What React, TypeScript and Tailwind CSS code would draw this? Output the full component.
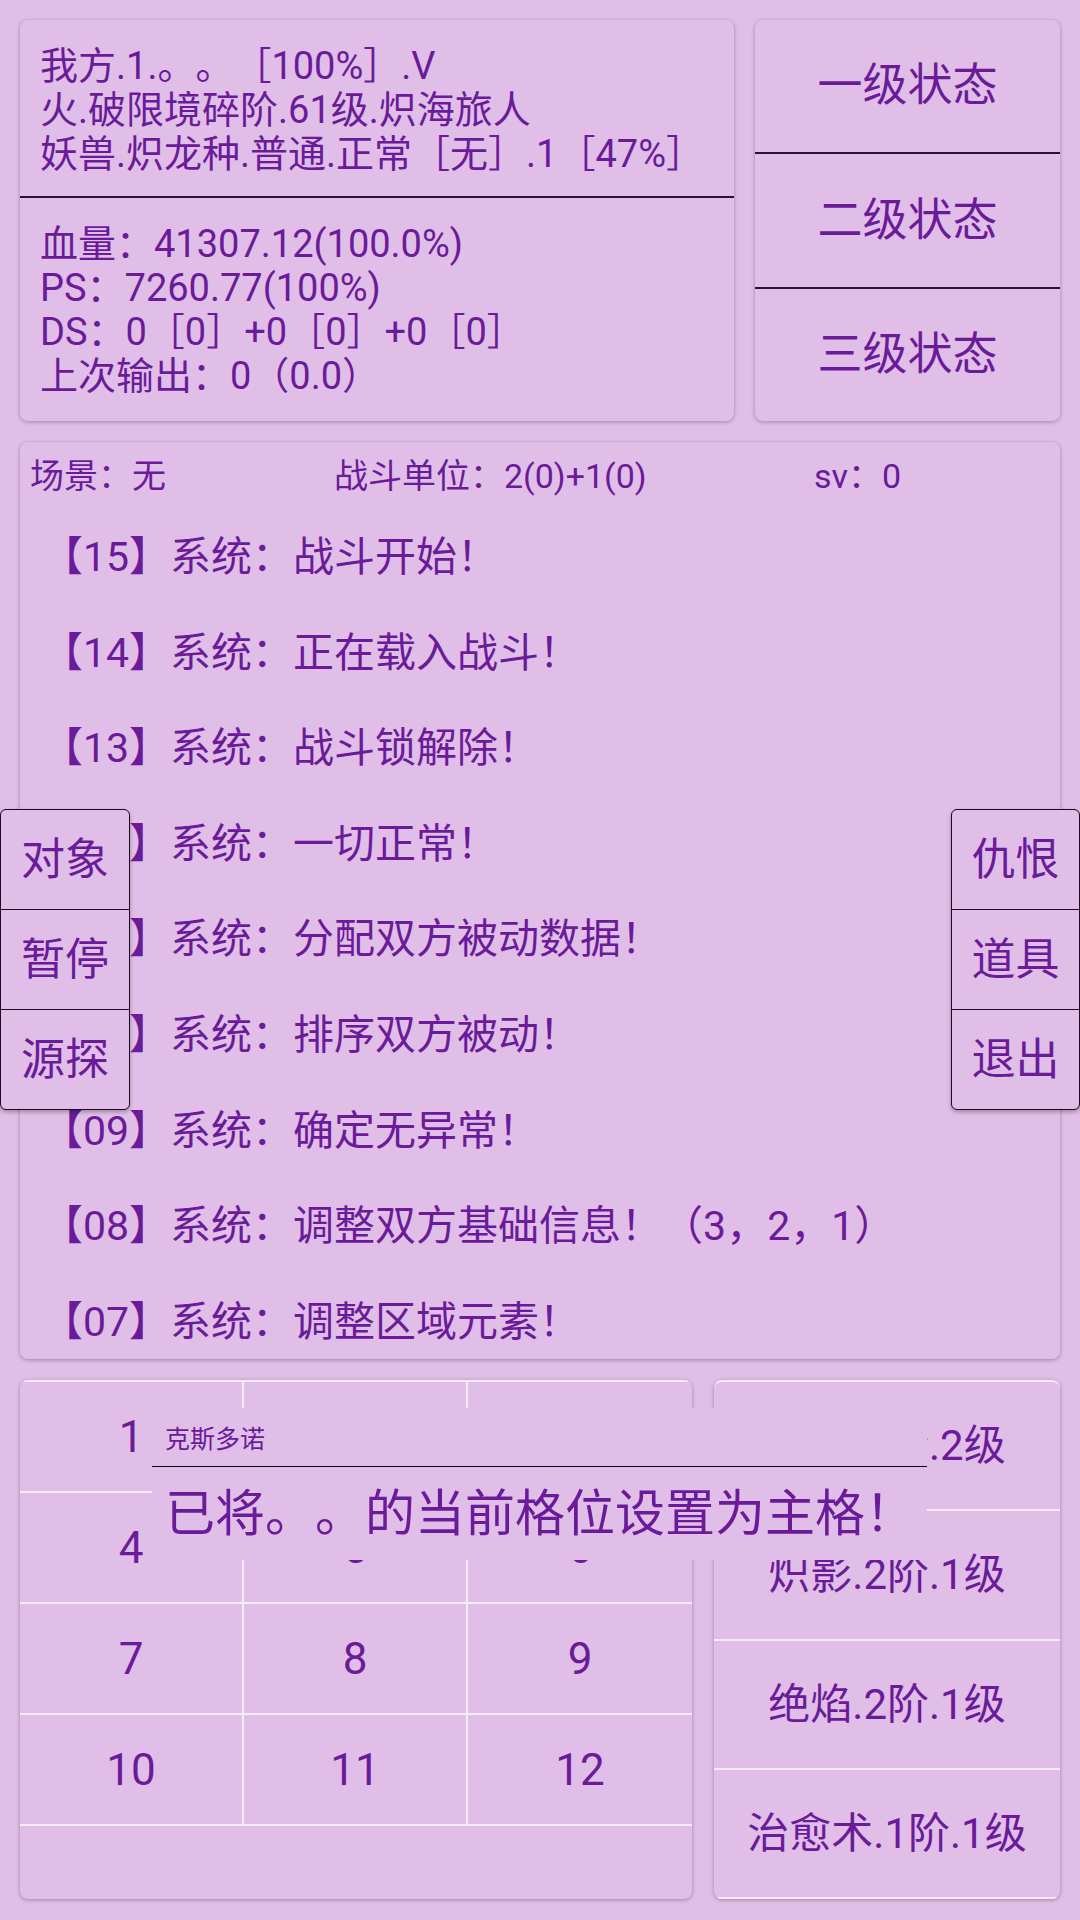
import React from "react";

const logs: [string, string][] = [
  ["15", "战斗开始！"],
  ["14", "正在载入战斗！"],
  ["13", "战斗锁解除！"],
  ["12", "一切正常！"],
  ["11", "分配双方被动数据！"],
  ["10", "排序双方被动！"],
  ["09", "确定无异常！"],
  ["08", "调整双方基础信息！（3，2，1）"],
  ["07", "调整区域元素！"],
];

const nums = ["1", "2", "3", "4", "5", "6", "7", "8", "9", "10", "11", "12"];
const skills = ["炎爆.2阶.2级", "炽影.2阶.1级", "绝焰.2阶.1级", "治愈术.1阶.1级"];

export default function App() {
  return (
    <div className="relative w-[1080px] h-[1920px] overflow-hidden bg-[#e1bee7] text-[#6a1b9a] font-[family-name:Roboto,'Noto_Sans_CJK_SC',sans-serif] [text-spacing-trim:space-all] px-[20px] pt-[20px] flex flex-col gap-[21px]">
      {/* Top row */}
      <div className="flex gap-[21px] h-[401px] shrink-0">
        <div className="w-[714px] shrink-0 rounded-[8px] bg-[#e1bee7] shadow-[0_1px_4px_rgba(0,0,0,0.3)] flex flex-col overflow-hidden">
          <div className="h-[178px] shrink-0 pt-[24px] pl-[20px] text-[38px] leading-[44px] border-b-2 border-[#2a1030] whitespace-nowrap">
            <div>我方.1.。。［100%］.V</div>
            <div>火.破限境碎阶.61级.炽海旅人</div>
            <div>妖兽.炽龙种.普通.正常［无］.1［47%］</div>
          </div>
          <div className="flex-1 pt-[24px] pl-[20px] text-[38px] leading-[44px] whitespace-nowrap">
            <div>血量：41307.12(100.0%)</div>
            <div>PS：7260.77(100%)</div>
            <div>DS：0［0］+0［0］+0［0］</div>
            <div>上次输出：0（0.0）</div>
          </div>
        </div>
        <div className="flex-1 rounded-[8px] bg-[#e1bee7] shadow-[0_1px_4px_rgba(0,0,0,0.3)] flex flex-col overflow-hidden">
          {["一级状态", "二级状态", "三级状态"].map((t, i) => (
            <div
              key={t}
              className={`flex-1 flex items-center justify-center text-[45px] ${i < 2 ? "border-b-2 border-[#2a1030]" : ""}`}
            >
              {t}
            </div>
          ))}
        </div>
      </div>

      {/* Battle log */}
      <div className="h-[917px] shrink-0 rounded-[8px] bg-[#e1bee7] shadow-[0_1px_4px_rgba(0,0,0,0.3)] flex flex-col overflow-hidden">
        <div className="h-[68px] shrink-0 flex items-center pl-[10px] text-[34px] whitespace-nowrap">
          <span className="w-[304px] shrink-0">场景：无</span>
          <span className="w-[480px] shrink-0">战斗单位：2(0)+1(0)</span>
          <span>sv：0</span>
        </div>
        {logs.map(([n, t]) => (
          <div key={n} className="h-[95.6px] shrink-0 flex items-center pl-[22px] text-[41px] whitespace-nowrap">
            【{n}】系统：{t}
          </div>
        ))}
      </div>

      {/* Bottom row */}
      <div className="flex gap-[22px] h-[519px] shrink-0">
        <div className="w-[672px] shrink-0 rounded-[8px] bg-[#e1bee7] shadow-[0_1px_4px_rgba(0,0,0,0.3)] overflow-hidden">
          <div className="grid grid-cols-3 border-t-2 border-[#f6ecf8]">
            {nums.map((n, i) => (
              <div
                key={n}
                className={`h-[111px] flex items-center justify-center text-[44px] border-b-2 border-[#f6ecf8] ${i % 3 < 2 ? "border-r-2" : ""}`}
              >
                {n}
              </div>
            ))}
          </div>
        </div>
        <div className="flex-1 rounded-[8px] bg-[#e1bee7] shadow-[0_1px_4px_rgba(0,0,0,0.3)] overflow-hidden flex flex-col border-t-2 border-[#f6ecf8]">
          {skills.map((s) => (
            <div key={s} className="flex-1 flex items-center justify-center text-[42px] border-b-2 border-[#f6ecf8] whitespace-nowrap">
              {s}
            </div>
          ))}
        </div>
      </div>

      {/* Left floating buttons */}
      <div className="absolute left-0 top-[809px] w-[130px] h-[301px] rounded-[6px] border border-[#1a0a1e] bg-[#e1bee7] shadow-[0_2px_4px_rgba(0,0,0,0.3)] flex flex-col overflow-hidden">
        {["对象", "暂停", "源探"].map((t, i) => (
          <div
            key={t}
            className={`flex-1 flex items-center justify-center text-[44px] ${i < 2 ? "border-b border-[#1a0a1e]" : ""}`}
          >
            {t}
          </div>
        ))}
      </div>

      {/* Right floating buttons */}
      <div className="absolute left-[951px] top-[809px] w-[129px] h-[301px] rounded-[6px] border border-[#1a0a1e] bg-[#e1bee7] shadow-[0_2px_4px_rgba(0,0,0,0.3)] flex flex-col overflow-hidden">
        {["仇恨", "道具", "退出"].map((t, i) => (
          <div
            key={t}
            className={`flex-1 flex items-center justify-center text-[44px] ${i < 2 ? "border-b border-[#1a0a1e]" : ""}`}
          >
            {t}
          </div>
        ))}
      </div>

      {/* Toast */}
      <div className="absolute left-[152px] top-[1408px] w-[775px] h-[152px] bg-[#e1bee7] flex flex-col">
        <div className="h-[59px] shrink-0 pt-[6px] pl-[13px] flex items-center text-[25px] border-b border-black">
          克斯多诺
        </div>
        <div className="flex-1 flex items-center pl-[13px] text-[50px] leading-none whitespace-nowrap">
          已将。。的当前格位设置为主格！
        </div>
      </div>
    </div>
  );
}
